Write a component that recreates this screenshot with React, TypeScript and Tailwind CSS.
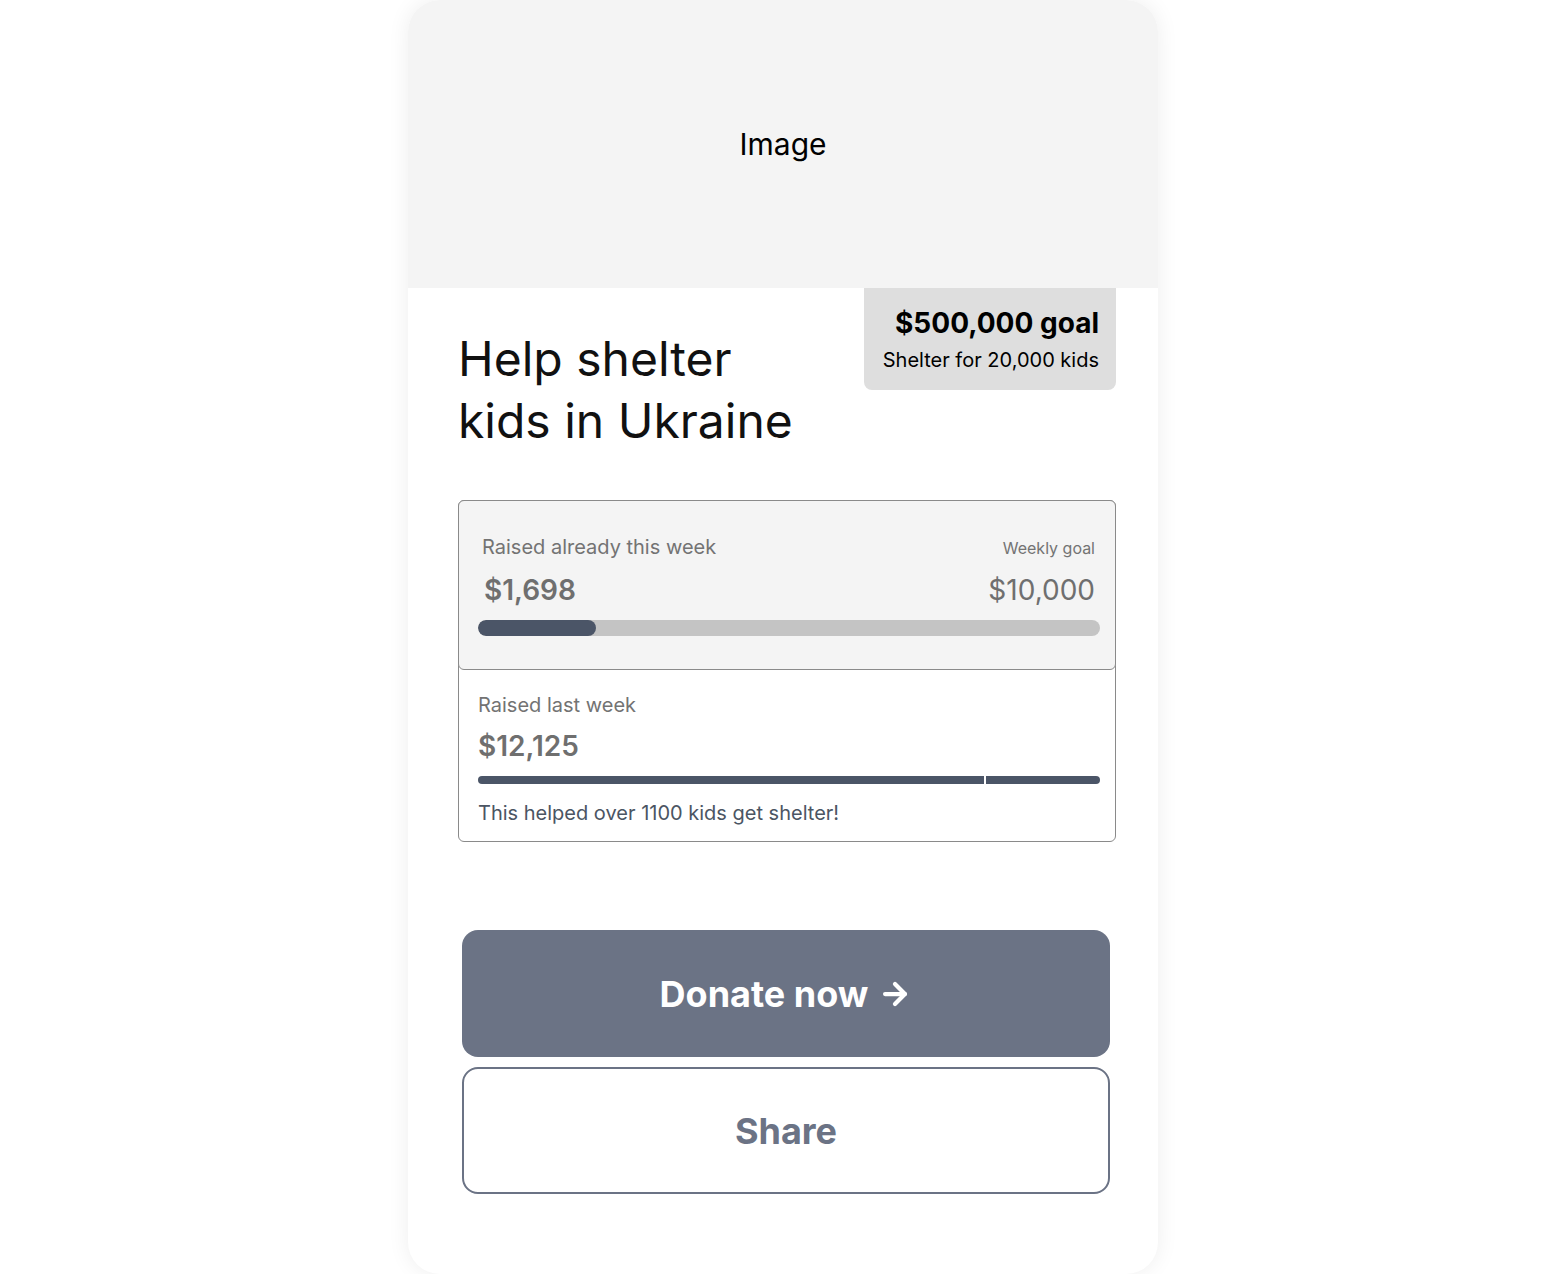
import { ArrowRight } from "lucide-react";

const raisedThisWeek = 1698;
const weeklyGoal = 10000;

export default function App() {
  const pct = (raisedThisWeek / weeklyGoal) * 100;

  return (
    <main className="flex min-h-screen w-full justify-center bg-white pr-[2px] font-['Inter',sans-serif]">
      <article className="flex h-[1274px] w-[750px] flex-col overflow-hidden rounded-[32px] bg-white shadow-[0_0_22px_rgba(0,0,0,0.07)]">
        <div className="flex h-[288px] items-center justify-center bg-[#f4f4f4]">
          <span className="text-[30px] text-black">Image</span>
        </div>

        <div className="flex flex-col pl-[50px] pr-[42px]">
          <div className="flex items-start justify-between">
            <h1 className="mt-[40px] text-[48px] leading-[62px] font-normal text-[#111]">
              Help shelter
              <br />
              kids in Ukraine
            </h1>
            <div className="flex h-[102px] w-[252px] flex-col items-end rounded-b-[8px] bg-[#dedede] pr-[17px] pt-[18px]">
              <p className="text-[28px] leading-[34px] font-bold text-black">$500,000 goal</p>
              <p className="mt-[8px] text-[20px] leading-[24px] text-black">Shelter for 20,000 kids</p>
            </div>
          </div>

          <section className="mt-[48px] rounded-[6px] border border-[#8a8a8a]">
            <div className="-m-px rounded-[6px] border border-[#8a8a8a] bg-[#f4f4f4] pb-[33px] pl-[19px] pr-[15px] pt-[34px]">
              <div className="flex items-baseline justify-between pl-[4px] pr-[5px]">
                <span className="text-[20px] leading-[24px] text-[#737373]">Raised already this week</span>
                <span className="text-[16px] leading-[20px] text-[#737373]">Weekly goal</span>
              </div>
              <div className="mt-[14px] flex items-baseline justify-between pl-[6px] pr-[5px]">
                <span className="text-[28px] leading-[34px] font-semibold text-[#6f6f6f]">$1,698</span>
                <span className="text-[28px] leading-[34px] text-[#6f6f6f]">$10,000</span>
              </div>
              <div className="mt-[13px] h-[16px] w-full overflow-hidden rounded-full bg-[#c4c4c4]">
                <div className="h-full rounded-full bg-[#4b5567]" style={{ width: `${pct + 2}%` }} />
              </div>
            </div>

            <div className="pb-[16px] pl-[19px] pr-[15px] pt-[24px]">
              <p className="text-[20px] leading-[24px] text-[#737373]">Raised last week</p>
              <p className="mt-[12px] text-[28px] leading-[34px] font-semibold text-[#6f6f6f]">$12,125</p>
              <div className="mt-[13px] flex h-[8px] w-full gap-[2px]">
                <div className="h-full w-[506px] rounded-l-full bg-[#4b5567]" />
                <div className="h-full flex-1 rounded-r-full bg-[#4b5567]" />
              </div>
              <p className="mt-[17px] text-[20px] leading-[24px] text-[#4b5563]">
                This helped over 1100 kids get shelter!
              </p>
            </div>
          </section>

          <div className="mt-[88px] flex flex-col gap-[10px] pl-[4px] pr-[6px]">
            <button
              type="button"
              className="flex h-[127px] items-center justify-center gap-[10px] rounded-[16px] bg-[#6b7385] text-[36px] font-bold text-white"
            >
              Donate now
              <ArrowRight size={34} strokeWidth={3} />
            </button>
            <button
              type="button"
              className="flex h-[127px] items-center justify-center rounded-[16px] border-2 border-[#6b7385] bg-white text-[36px] font-bold text-[#6b7385]"
            >
              Share
            </button>
          </div>
        </div>
      </article>
    </main>
  );
}
